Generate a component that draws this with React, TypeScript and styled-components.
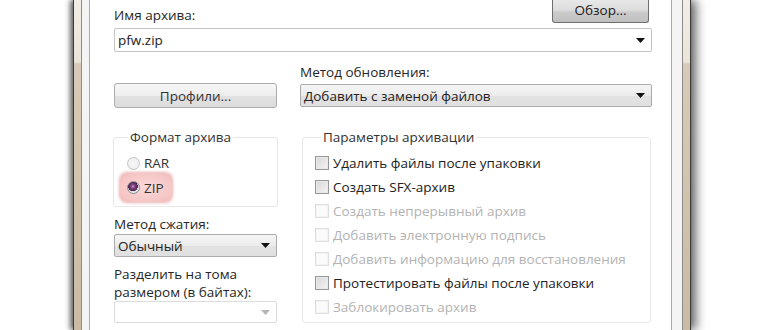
import React from "react";
import styled, { createGlobalStyle } from "styled-components";

const Global = createGlobalStyle`
  html, body { margin: 0; padding: 0; background: #fff; }
  body {
    width: 770px; height: 330px; overflow: hidden;
    font-family: "Open Sans", "Noto Sans", "DejaVu Sans", sans-serif;
  }
`;

const Page = styled.div`
  width: 770px; height: 330px; box-sizing: border-box;
  display: flex; padding-left: 73px; background: #fff; overflow: hidden;
`;

const Window = styled.div`
  width: 618px; height: 330px; box-sizing: border-box; display: flex;
  border-left: 1px solid #3a3a3a; border-right: 1px solid #3a3a3a;
  padding: 0 7px;
  background: linear-gradient(to bottom, #f2ede5 0, #ece4d8 62px, #d8cab6 64px, #cbbba4 100%);
  box-shadow: -3px 0 5px rgba(0, 0, 0, 0.55), 5px 0 10px rgba(0, 0, 0, 0.6);
`;

const InnerFrame = styled.div`
  flex: 1; display: flex;
  border-left: 1px solid #8c8c8c; border-right: 1px solid #8c8c8c;
  padding: 0 10px 0 7px; background: #f4f4f4;
`;

const Content = styled.div`
  flex: 1; display: flex; flex-direction: column;
  border-left: 1px solid #a9a9a9; border-right: 1px solid #a9a9a9;
  background: #fff; padding: 0 19px 0 24px; overflow: hidden;
  font-size: 13.5px; color: #1f1f1f;
`;

const TopRow = styled.div`
  display: flex; justify-content: space-between; align-items: flex-end; height: 23px;
`;

const FieldLabel = styled.div<{ $mt?: number; $lh?: number }>`
  line-height: ${(p) => p.$lh ?? 16}px;
  margin-top: ${(p) => p.$mt ?? 0}px;
  color: #262626;
`;

const BrowseButton = styled.button`
  width: 97px; height: 23px; margin-right: 3px; padding: 0 0 2px;
  border: 1px solid #6f6f6f; border-top: none; border-radius: 0 0 3px 3px;
  background: linear-gradient(to bottom, #e8e8e8 0%, #dddddd 45%, #cbcbcb 55%, #c0c0c0 100%);
  font: inherit; color: #1a1a1a;
`;

type ComboKind = "edit" | "list" | "disabled";

const ComboBox = styled.div<{ $kind: ComboKind; $h: number; $mt: number }>`
  height: ${(p) => p.$h}px; margin-top: ${(p) => p.$mt}px; box-sizing: border-box;
  display: flex; align-items: center; justify-content: space-between;
  padding: 0 6px 0 3px; border-radius: 2px;
  border: 1px solid ${(p) => (p.$kind === "edit" ? "#c4c4c4" : p.$kind === "list" ? "#ababab" : "#dcdcdc")};
  background: ${(p) =>
    p.$kind === "list"
      ? "linear-gradient(to bottom, #f5f5f5 0%, #ececec 50%, #e2e2e2 51%, #e0e0e0 100%)"
      : "#fff"};
  color: #222;
`;

const Arrow = ({ disabled }: { disabled?: boolean }) => (
  <svg width="9" height="5" viewBox="0 0 9 5">
    <polygon points="0,0 9,0 4.5,5" fill={disabled ? "#b5b5b5" : "#111"} />
  </svg>
);

const Combo = ({ kind, h, mt, text }: { kind: ComboKind; h: number; mt: number; text?: string }) => (
  <ComboBox $kind={kind} $h={h} $mt={mt}>
    <span>{text}</span>
    <Arrow disabled={kind === "disabled"} />
  </ComboBox>
);

const TwoCols = styled.div<{ $mt: number }>`
  display: grid; grid-template-columns: 163px 1fr; column-gap: 23px;
  margin-top: ${(p) => p.$mt}px; align-items: start;
`;

const Column = styled.div`
  display: flex; flex-direction: column;
`;

const PushButton = styled.button`
  height: 25px; margin-top: 19px; padding: 0;
  border: 1px solid #acacac; border-radius: 3px;
  background: linear-gradient(to bottom, #f6f6f6 0%, #eeeeee 50%, #e2e2e2 51%, #dcdcdc 100%);
  font: inherit; color: #333;
`;

const Group = styled.fieldset<{ $ml: number; $mr: number; $pt: number; $pb: number; $pl: number }>`
  margin: 0 ${(p) => p.$mr}px 0 ${(p) => p.$ml}px; min-width: 0;
  padding: ${(p) => p.$pt}px 4px ${(p) => p.$pb}px ${(p) => p.$pl}px;
  border: 1px solid #e8e8e8; border-radius: 3px;
  display: flex; flex-direction: column; align-items: flex-start;
`;

const Legend = styled.legend<{ $ml: number }>`
  padding: 0 2px; margin-left: ${(p) => p.$ml}px; line-height: 16px; color: #333;
`;

const RadioOption = styled.div<{ $selected?: boolean }>`
  display: flex; align-items: center; gap: 4px; box-sizing: border-box;
  height: ${(p) => (p.$selected ? 29 : 20)}px;
  padding: 0 8px 0 7px; border-radius: 7px;
  background: ${(p) =>
    p.$selected ? "radial-gradient(ellipse at center, #fbd9d9 0%, #f6c6c6 70%, #f1b9b9 100%)" : "transparent"};
  box-shadow: ${(p) => (p.$selected ? "0 0 3px 1px rgba(215, 120, 120, 0.55)" : "none")};
  color: #333;
`;

const RadioCircle = styled.span<{ $checked?: boolean }>`
  width: 13px; height: 13px; box-sizing: border-box; border-radius: 50%;
  border: 1px solid ${(p) => (p.$checked ? "#8d8d8d" : "#c4c4c4")};
  background: ${(p) =>
    p.$checked
      ? "radial-gradient(circle at 45% 40%, #d2b0d2 0, #8a4c8a 1.5px, #5a2a5c 4px, #3e1840 4.6px, #dedede 5px, #f4f4f4 100%)"
      : "radial-gradient(circle at 50% 50%, #f7f7f7 0, #ececec 100%)"};
`;

const CheckRow = styled.div<{ $disabled?: boolean }>`
  display: flex; align-items: center; gap: 4px; height: 24px;
  color: ${(p) => (p.$disabled ? "#b3b3b3" : "#222")};
`;

const CheckBox = styled.span<{ $disabled?: boolean }>`
  width: 14px; height: 14px; box-sizing: border-box;
  border: 1px solid ${(p) => (p.$disabled ? "#dedede" : "#979797")};
  background: ${(p) =>
    p.$disabled ? "#fbfbfb" : "linear-gradient(135deg, #d6d6d6 0%, #e6e6e6 50%, #f4f4f4 100%)"};
  box-shadow: inset 0 0 0 1px ${(p) => (p.$disabled ? "#f4f4f4" : "#eaeaea")};
`;

const options: { text: string; disabled?: boolean }[] = [
  { text: "Удалить файлы после упаковки" },
  { text: "Создать SFX-архив" },
  { text: "Создать непрерывный архив", disabled: true },
  { text: "Добавить электронную подпись", disabled: true },
  { text: "Добавить информацию для восстановления", disabled: true },
  { text: "Протестировать файлы после упаковки" },
  { text: "Заблокировать архив", disabled: true },
];

export default function App() {
  return (
    <Page>
      <Global />
      <Window>
        <InnerFrame>
          <Content>
            <TopRow>
              <FieldLabel>Имя архива:</FieldLabel>
              <BrowseButton>Обзор...</BrowseButton>
            </TopRow>
            <Combo kind="edit" h={24} mt={5} text="pfw.zip" />

            <TwoCols $mt={12}>
              <Column>
                <PushButton>Профили...</PushButton>
              </Column>
              <Column>
                <FieldLabel>Метод обновления:</FieldLabel>
                <Combo kind="list" h={23} mt={4} text="Добавить с заменой файлов" />
              </Column>
            </TwoCols>

            <TwoCols $mt={21}>
              <Column>
                <Group $ml={-1} $mr={-1} $pt={8} $pb={4} $pl={6}>
                  <Legend $ml={8}>Формат архива</Legend>
                  <RadioOption>
                    <RadioCircle />
                    RAR
                  </RadioOption>
                  <RadioOption $selected>
                    <RadioCircle $checked />
                    ZIP
                  </RadioOption>
                </Group>
                <FieldLabel $mt={9}>Метод сжатия:</FieldLabel>
                <Combo kind="list" h={23} mt={2} text="Обычный" />
                <FieldLabel $mt={8} $lh={18}>Разделить на тома</FieldLabel>
                <FieldLabel $lh={18}>размером (в байтах):</FieldLabel>
                <Combo kind="disabled" h={22} mt={0} />
              </Column>
              <Column>
                <Group $ml={2} $mr={1} $pt={6} $pb={3} $pl={12}>
                  <Legend $ml={6}>Параметры архивации</Legend>
                  {options.map((o) => (
                    <CheckRow key={o.text} $disabled={o.disabled}>
                      <CheckBox $disabled={o.disabled} />
                      {o.text}
                    </CheckRow>
                  ))}
                </Group>
              </Column>
            </TwoCols>
          </Content>
        </InnerFrame>
      </Window>
    </Page>
  );
}
